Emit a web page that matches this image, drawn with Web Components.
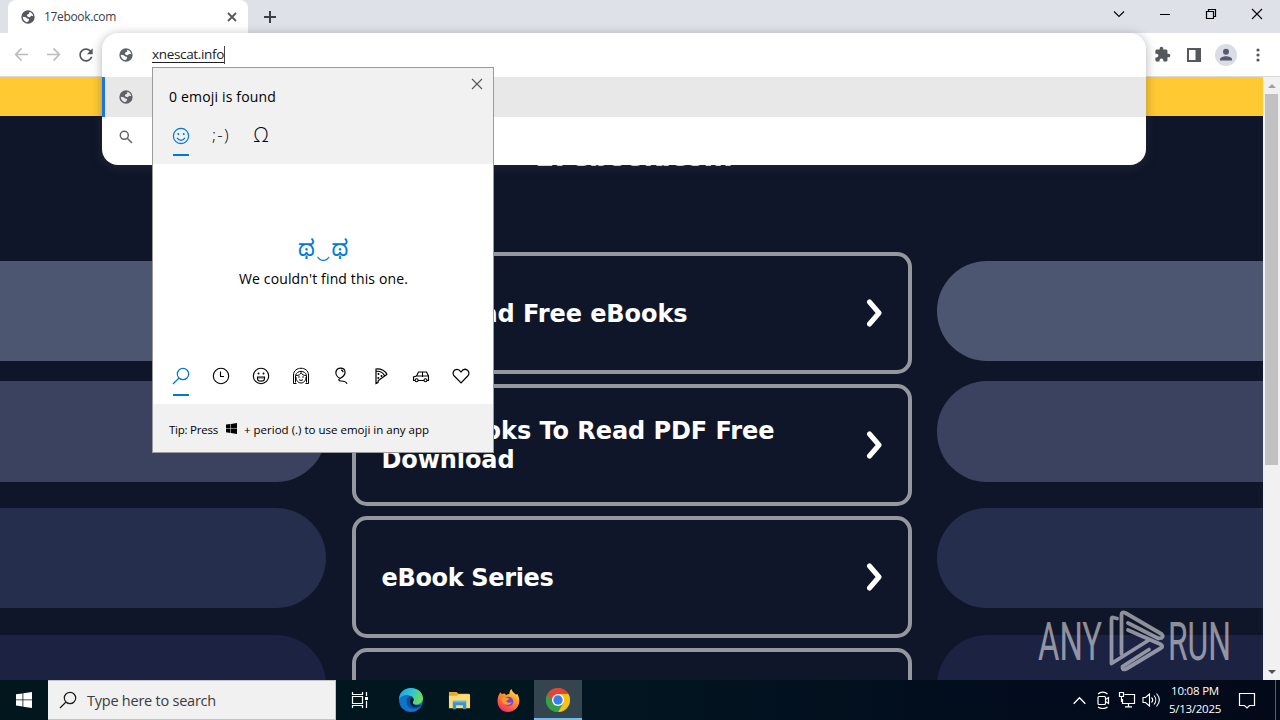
<!DOCTYPE html>
<html lang="en">
<head>
<meta charset="utf-8">
<title>17ebook.com</title>
<style>
  body {
    margin: 0;
    width: 1280px;
    height: 720px;
    overflow: hidden;
    font-family: "Open Sans", "Noto Sans", sans-serif;
  }
</style>
</head>
<body>
<desktop-screen>
  <browser-window>
    <tab-strip slot="tabs" title="17ebook.com"></tab-strip>
    <browser-toolbar slot="toolbar"></browser-toolbar>
    <parked-page slot="page">
      <link-card>
        <fit-text width="306">Download Free eBooks</fit-text>
      </link-card>
      <link-card>
        <fit-text width="393">Best Books To Read PDF Free</fit-text>
        <fit-text width="133">Download</fit-text>
      </link-card>
      <link-card>
        <fit-text width="172">eBook Series</fit-text>
      </link-card>
      <link-card></link-card>
    </parked-page>
  </browser-window>
  <task-bar></task-bar>
  <omnibox-popup slot="over"></omnibox-popup>
  <emoji-panel slot="over"></emoji-panel>
  <water-mark slot="over"></water-mark>
</desktop-screen>

<script>
// icon shapes, [viewBox size, markup]
const icons = {
  globe: [24, `<path fill="currentColor" fill-rule="evenodd" d="M12 2a10 10 0 1 0 0 20a10 10 0 1 0 0-20zM14.200 4.200C17.500 5.200 19.400 7.600 19.900 10.800L17 10.300l-2.500 2-3-.800-1.300-2 1.500-1.500 1.800-.800zM4.100 11.800l4.600.500 2 1.800 3 .800-.700 3-2.500 2C6.800 19 4.100 15.800 4.100 11.800z"/>`],
  cross: [16, `<path d="M4 4l8 8M12 4l-8 8" stroke="currentColor" stroke-width="1.8"/>`],
  plus: [16, `<path d="M8 2v12M2 8h12" stroke="currentColor" stroke-width="2"/>`],
  tabsearch: [16, `<path d="M3 5.500l5 5 5-5" fill="none" stroke="currentColor" stroke-width="1.100"/>`],
  minimize: [16, `<path d="M3 8.5h10" stroke="currentColor"/>`],
  restore: [16, `<path d="M3.500 5.500h7v7h-7zM5.500 5v-1.500h7v7H11" fill="none" stroke="currentColor" stroke-width="1.2"/>`],
  close: [16, `<path d="M3 3l10 10M13 3L3 13" stroke="currentColor" stroke-width="1.1"/>`],
  back: [16, `<path d="M15 8H2M8 1.500L1.800 8 8 14.500" fill="none" stroke="currentColor" stroke-width="1.800"/>`],
  forward: [16, `<path d="M1 8h13M8 1.500L14.200 8 8 14.500" fill="none" stroke="currentColor" stroke-width="1.800"/>`],
  reload: [24, `<path fill="currentColor" d="M17.650 6.350C16.200 4.900 14.210 4 12 4c-4.420 0-7.990 3.580-7.990 8s3.570 8 7.990 8c3.730 0 6.840-2.550 7.730-6h-2.080c-.820 2.330-3.040 4-5.650 4-3.310 0-6-2.690-6-6s2.690-6 6-6c1.660 0 3.140.690 4.220 1.780L13 11h7V4l-2.350 2.350z"/>`],
  puzzle: [24, `<path fill="currentColor" d="M20.500 11H19V7c0-1.100-.900-2-2-2h-4V3.500C13 2.120 11.880 1 10.500 1S8 2.120 8 3.500V5H4c-1.100 0-1.990.900-1.990 2v3.800H3.500c1.490 0 2.700 1.210 2.700 2.700s-1.210 2.700-2.700 2.700H2V20c0 1.100.900 2 2 2h3.800v-1.500c0-1.490 1.210-2.700 2.700-2.700 1.490 0 2.700 1.210 2.700 2.700V22H17c1.100 0 2-.900 2-2v-4h1.500c1.380 0 2.500-1.120 2.500-2.500S21.880 11 20.500 11z"/>`],
  sidepanel: [16, `<path fill="currentColor" fill-rule="evenodd" d="M1 1h14v14H1zM3 3v10h6.500V3z"/>`],
  profile: [22, `<circle cx="11" cy="11" r="11" fill="#dadce6"/><circle cx="11" cy="7.700" r="3" fill="currentColor"/><path fill="currentColor" d="M5 16.500v-1.300c0-2 3.500-3 6-3s6 1 6 3v1.300z"/>`],
  dots: [16, `<g fill="currentColor"><circle cx="8" cy="3" r="1.600"/><circle cx="8" cy="8" r="1.600"/><circle cx="8" cy="13" r="1.600"/></g>`],
  lens: [16, `<g fill="none" stroke="currentColor" stroke-width="1.500"><circle cx="6.300" cy="6.300" r="4"/><path d="M9.300 9.300l4.700 4.700"/></g>`],
  winlens: [18, `<g fill="none" stroke="currentColor" stroke-width="1.200"><circle cx="11" cy="7" r="5.700"/><path d="M7 11l-6 6"/></g>`],
  smile: [18, `<g fill="none" stroke="currentColor" stroke-width="1.200"><circle cx="9" cy="9" r="7.600"/><path d="M5 10.800c1.700 3.300 6.300 3.300 8 0"/></g><circle cx="6.300" cy="7" r="1"/><circle cx="11.700" cy="7" r="1"/>`],
  clock: [18, `<g fill="none" stroke="currentColor" stroke-width="1.100"><circle cx="9" cy="9" r="7.700"/><path d="M8.500 4.500v5H12"/></g>`],
  grin: [18, `<g fill="none" stroke="currentColor" stroke-width="1.100"><circle cx="9" cy="9" r="7.700"/><path d="M5.500 10h7v1.500c0 3.500-7 3.500-7 0z"/><path d="M5.500 11h7" stroke-width=".6"/></g><circle cx="6.500" cy="6.500" r="1"/><circle cx="11.500" cy="6.500" r="1"/>`],
  person: [18, `<g fill="none" stroke="currentColor"><path d="M1.500 16.500V8C1.500-1 16.500-1 16.500 8v8.500h-3M1.500 16.500h3M3.500 15.500V8.500C4.500 3 13.500 3 14.500 8.500v7"/><path d="M4 10c0 8 10 8 10 0M4 8.500c3 0 4.500-1 5-3 1 2 2.500 3 5 3M7 12.500c1 1.200 3 1.200 4 0"/></g><circle cx="7" cy="10" r=".8"/><circle cx="11" cy="10" r=".8"/>`],
  balloon: [18, `<g fill="none" stroke="currentColor" stroke-width="1.200"><path d="M8 11.500C4.500 9.500 3.500 6.500 4 4.500c1-4.500 8.500-4.500 9 0 .300 3-2 5.500-5 7zM8 11.500c-2 1-1.500 2.500 1 2.500s5 .500 6 2.700"/><path d="M9 3.200c1.500 0 2 1 2 2"/></g>`],
  pizza: [18, `<g fill="none" stroke="currentColor" stroke-width="1.200"><path d="M4 2v14.500l2-1 .300-2L14.800 7.500C14 4 9 1.500 4 2zM4 4.300c4-.300 7.200 1.500 8.500 4.500"/></g><circle cx="6.500" cy="7" r="1"/><circle cx="9.500" cy="9" r="1"/><circle cx="6.300" cy="11" r="1"/>`],
  car: [18, `<g fill="none" stroke="currentColor" stroke-width="1.100"><path d="M3 13.500H1.500v-3.500L4.500 9l2-4h8l2 4v4.500H15M6 13.500h6M4.500 9h12M10.500 5v5"/><circle cx="4.600" cy="13.300" r="1.500"/><circle cx="13.500" cy="13.300" r="1.500"/></g>`],
  heart: [18, `<path d="M9 15.800L2.300 9C.300 6.800 1 4.200 2.800 3c2-1.300 4.500-.500 6.200 2 1.700-2.500 4.200-3.300 6.200-2 1.800 1.200 2.500 3.800.500 6z" fill="none" stroke="currentColor" stroke-width="1.200"/>`],
  windows: [16, `<path fill="currentColor" d="M0 2.300l6.500-.900v6.100H0zM7.300 1.300L16 0v7.500H7.300zM0 8.300h6.500v6.200L0 13.600zM7.300 8.300H16V16l-8.700-1.300z"/>`],
  taskview: [18, `<g fill="none" stroke="currentColor" stroke-width="1.200"><path d="M1.500 1v2.500h10V1M1.500 17v-2.500h10V17M1.500 5.500h10v7h-10zM15.500 1v4M15.500 10v7"/></g><path fill="currentColor" d="M14 6h3v3h-3z"/>`],
  edge: [24, `<defs><linearGradient id="a" x2="1" y2=".3"><stop stop-color="#1a9de0"/><stop offset=".55" stop-color="#32c4d4"/><stop offset="1" stop-color="#6bdb58"/></linearGradient></defs><circle cx="12" cy="12" r="12" fill="#1173c9"/><path fill="url(#a)" d="M0 11C1-4 23-3 24 10c0 4-3 6.500-7 6.500-2.500 0-3.600-1-3.300-2 .6-.8.8-1.500.8-2.500C14.500 7 5 4 0 11z"/><path fill="#0b4f9c" d="M7.500 13c0-3 2-5 4.500-5 2 .7 3 2.500 2.300 4.500-.4 1-.8 1.300-.5 2.500.6 2.500 5 3.500 8.700 1.400C19 23 7.500 22.500 7.500 13z"/><path fill="#021820" d="M12.500 9.500c2 .5 2.600 2 1.800 3.500-.9 1.300-.8 2 0 3 1.800 2 5.700 1.900 8.400.3-2.500 2.600-6.600 3.800-9.200 1.700-2.800-2.300-3-6-1-8.500z"/>`],
  folder: [24, `<path fill="#e8a92c" d="M1 3h8l2 2h11v4H1z"/><path fill="#ffdc73" d="M1 7h8l2-1.500h12V20H1z"/><path fill="#3a94d3" d="M5 21v-8h14v8h-3.500v-4h-7v4z"/><path fill="#6bb7e8" d="M5 12h14v2H5z"/>`],
  firefox: [24, `<defs><linearGradient id="b" x1=".8" x2=".2" y2="1"><stop stop-color="#ffe640"/><stop offset=".45" stop-color="#ff8a2a"/><stop offset="1" stop-color="#f4246b"/></linearGradient></defs><path fill="url(#b)" d="M3.500 3.500l1.700 2L7.500 4.500 9.500 6.200 13 5c0-2 .5-3.500 2-5 .7 3 3 4 5 6l1-1c6 9-.500 19-9.500 19C2 24-3 13 3.500 3.500z"/><circle cx="12" cy="13" r="5" fill="#7b43d6"/><path fill="#ff9a24" d="M4.500 9.500c3-2 5.500-.5 8 .3-.5 1.800-2 1.800-3 2.500.5 2.500 4.500 2.500 6 1-1 5-11 5-11-3.800z"/>`],
  chrome: [24, `<circle cx="12" cy="12" r="12" fill="#34a048"/><path fill="#e64335" d="M1.600 6A12 12 0 0 1 22.400 6H12l-5.200 9z"/><path fill="#fbc116" d="M22.400 6A12 12 0 0 1 12 24l5.200-9L12 6z"/><path fill="#34a048" d="M1.600 6l5.200 9h10.400L12 24A12 12 0 0 1 1.600 6z"/><circle cx="12" cy="12" r="6" fill="#fff"/><circle cx="12" cy="12" r="4.700" fill="#3b7ded"/>`],
  chevup: [16, `<path d="M2.500 11L8 5.500l5.500 5.500" fill="none" stroke="currentColor" stroke-width="1.300"/>`],
  meet: [18, `<g fill="none" stroke="currentColor" stroke-width="1.200"><rect x="4" y="5.500" width="7.500" height="8" rx="1"/><path d="M11.500 8.500l3-2v6l-3-2M4 3c2.500-2.500 7-2.500 9.500 0M4 16c2.500 2 7 2 9.500 0"/></g>`],
  network: [18, `<g fill="none" stroke="currentColor" stroke-width="1.200"><path d="M6.500 3.500h10v9h-12V8M10.500 12.500v3M7 15.800h7M1.500 1.500h4v4h-4zM3.500 5.500v5h1.500"/></g>`],
  volume: [18, `<g fill="none" stroke="currentColor" stroke-width="1.100"><path d="M1 6.500h2.500L7.500 3v12L3.500 11.500H1zM9.500 6.500c1.500 1.500 1.500 3.500 0 5M12 4.500c2.300 2.600 2.300 6.400 0 9M14.500 2.500c3.500 4 3.500 9 0 13"/></g>`],
  notice: [18, `<path d="M1.500 2.500h15v12h-5L9 17l-2.500-2.500h-5z" fill="none" stroke="currentColor" stroke-width="1.200"/>`],
  next: [28, `<path d="M8.500 3l9.500 11-9.500 11" fill="none" stroke="currentColor" stroke-width="5" stroke-linecap="round" stroke-linejoin="round"/>`]
};

// every element gets its template cloned into an open shadow root
class BaseElement extends HTMLElement {
  constructor() {
    super();
    const template = document.createElement("template");
    template.innerHTML = this.html();
    this.attachShadow({ mode: "open" }).appendChild(template.content.cloneNode(true));
  }
}

// <ui-icon name="" size="">
customElements.define("ui-icon", class extends HTMLElement {
  shadowDom = this.attachShadow({ mode: "open" });
  connectedCallback() {
    const [box, shape] = icons[this.getAttribute("name")];
    const size = this.getAttribute("size") || 16;
    this.shadowDom.innerHTML = `
<style>
  :host { display: block; flex: none; width: ${size}px; height: ${size}px; }
  svg { display: block; fill: currentColor; }
</style>
<svg width="${size}" height="${size}" viewBox="0 0 ${box} ${box}">${shape}</svg>`;
  }
});

// <fit-text width="">, spreads its letters over the given width
customElements.define("fit-text", class extends HTMLElement {
  shadowDom = this.attachShadow({ mode: "open" });
  connectedCallback() {
    this.shadowDom.innerHTML = `
<style>
  :host { display: block; }
  span { display: block; width: max-content; white-space: nowrap; }
</style>
<span><slot></slot></span>`;
    const fit = () => {
      const span = this.shadowDom.querySelector("span");
      span.style.letterSpacing = "0";
      const rest = this.getAttribute("width") - span.getBoundingClientRect().width;
      span.style.letterSpacing = rest / this.textContent.length + "px";
    };
    window.addEventListener("load", fit);
  }
});

customElements.define("desktop-screen", class extends BaseElement {
  html() {
    return /*html*/ `
<style>
  :host { display: flex; flex-direction: column; position: relative; width: 1280px; height: 720px; overflow: hidden; }
</style>
<slot></slot>
<slot name="over"></slot>`;
  }
});

customElements.define("browser-window", class extends BaseElement {
  html() {
    return /*html*/ `
<style>
  :host { display: flex; flex-direction: column; height: 680px; overflow: hidden; background: #fff; }
  .content { flex: 1; display: flex; min-height: 0; }
</style>
<slot name="tabs"></slot>
<slot name="toolbar"></slot>
<div class="content">
  <slot name="page"></slot>
  <scroll-bar></scroll-bar>
</div>`;
  }
});

customElements.define("tab-strip", class extends BaseElement {
  html() {
    return /*html*/ `
<style>
  :host { display: flex; height: 33px; background: #dee1e8; color: #202124; padding-left: 8px; }
  .tab { box-sizing: border-box; display: flex; align-items: center; width: 240px; height: 33px; padding: 0 8px 0 12px; background: #fff; border-radius: 8px 8px 0 0; font-size: 12px; color: #3c4043; }
  .tab fit-text { flex: 1; margin-left: 8px; }
  .tab ui-icon { color: #55585c; }
  .new { margin: 9px 0 0 14px; color: #3c4043; }
  .controls { display: flex; margin-left: auto; align-items: center; height: 28px; gap: 30px; padding-right: 15px; color: #000; }
</style>
<div class="tab">
  <ui-icon name="globe"></ui-icon>
  <fit-text width="72">17ebook.com</fit-text>
  <ui-icon name="cross" size="16"></ui-icon>
</div>
<ui-icon class="new" name="plus"></ui-icon>
<div class="controls">
  <ui-icon name="tabsearch"></ui-icon>
  <ui-icon name="minimize"></ui-icon>
  <ui-icon name="restore"></ui-icon>
  <ui-icon name="close"></ui-icon>
</div>`;
  }
});

customElements.define("browser-toolbar", class extends BaseElement {
  html() {
    return /*html*/ `
<style>
  :host { box-sizing: border-box; display: flex; justify-content: space-between; align-items: center; height: 44px; padding: 0 14px; border-bottom: 1px solid #d8dadd; background: #fff; color: #54575c; }
  .group { display: flex; align-items: center; }
  .nav { gap: 17px; }
  .nav .off { color: #bbbdc0; }
  .nav ui-icon:last-child { margin-left: -2px; }
  .tools { gap: 15px; }
  .tools .profile { margin: 0 -2px; color: #565a72; }
</style>
<div class="group nav">
  <ui-icon class="off" name="back" size="15"></ui-icon>
  <ui-icon class="off" name="forward" size="15"></ui-icon>
  <ui-icon name="reload" size="20"></ui-icon>
</div>
<div class="group tools">
  <ui-icon name="puzzle" size="17"></ui-icon>
  <ui-icon name="sidepanel" size="16"></ui-icon>
  <ui-icon class="profile" name="profile" size="22"></ui-icon>
  <ui-icon name="dots" size="16"></ui-icon>
</div>`;
  }
});

customElements.define("scroll-bar", class extends BaseElement {
  html() {
    return /*html*/ `
<style>
  :host { display: flex; flex-direction: column; align-items: center; width: 17px; background: #f1f1f1; }
  i { height: 17px; display: flex; align-items: center; }
  i::before { content: ""; border: 4px solid transparent; }
  .up::before { border-top: 0; border-bottom-color: #a0a0a0; }
  .down { margin-top: auto; }
  .down::before { border-bottom: 0; border-top-color: #505050; }
  .thumb { width: 13px; height: 371px; background: #c1c1c1; }
</style>
<i class="up"></i>
<div class="thumb"></div>
<i class="down"></i>`;
  }
});

customElements.define("parked-page", class extends BaseElement {
  html() {
    return /*html*/ `
<style>
  :host { display: flex; flex-direction: column; width: 1263px; overflow: hidden; background: #10162a; color: #fff; }
  .band { flex: none; height: 39px; background: #ffc933; }
  .columns { display: grid; grid-template-columns: 326px 1fr 326px; height: 564px; }
  .side { display: flex; flex-direction: column; padding-top: 145px; }
  .side b { flex: none; height: 100px; border-radius: 0 50px 50px 0; background: #4d5671; }
  .right b { border-radius: 50px 0 0 50px; }
  .side b:nth-child(2) { margin-top: 20px; height: 101px; background: #3b4260; }
  .side b:nth-child(3) { margin-top: 26px; background: #262e4e; }
  .side b:nth-child(4) { margin-top: 27px; background: #1b2242; }
  .middle { display: flex; flex-direction: column; align-items: center; font: bold 24px/29px "DejaVu Sans", sans-serif; }
  h1 { margin: 26px 0 81px; height: 29px; font: bold 28px/29px "DejaVu Sans", sans-serif; }
  h1 fit-text { margin-left: 3px; }
  .list { display: flex; flex-direction: column; gap: 10px; }
</style>
<div class="band"></div>
<div class="columns">
  <div class="side left"><b></b><b></b><b></b><b></b></div>
  <div class="middle">
    <h1><fit-text width="197">17ebook.com</fit-text></h1>
    <div class="list"><slot></slot></div>
  </div>
  <div class="side right"><b></b><b></b><b></b><b></b></div>
</div>`;
  }
});

customElements.define("link-card", class extends BaseElement {
  html() {
    return /*html*/ `
<style>
  :host { box-sizing: border-box; display: flex; align-items: center; justify-content: space-between; width: 560px; height: 122px; padding: 0 19px 0 26px; border: 4px solid #94979b; border-radius: 15px; background: #10162a; }
  div { padding-top: 2px; }
</style>
<div><slot></slot></div>
<ui-icon name="next" size="28"></ui-icon>`;
  }
});

customElements.define("omnibox-popup", class extends BaseElement {
  html() {
    return /*html*/ `
<style>
  :host { position: absolute; left: 102px; top: 33px; width: 1044px; height: 132px; border-radius: 16px; overflow: hidden; background: #fff; box-shadow: 0 2px 10px 1px rgba(60, 64, 67, .34); font-size: 13.5px; color: #202124; }
  .row { box-sizing: border-box; display: flex; align-items: center; height: 44px; padding-left: 16px; color: #5f6368; }
  .row.picked { height: 40px; padding-left: 13px; border-left: 3px solid #1a73e8; background: #e8e8e8; }
  .row.last { height: 40px; }
  .typed { margin: 0 0 1px 18px; line-height: 15px; border-bottom: 1px solid #202124; color: #202124; }
  .caret { width: 1px; height: 18px; background: #444; margin-bottom: 1px; }
</style>
<div class="row">
  <ui-icon name="globe"></ui-icon>
  <fit-text class="typed" width="72">xnescat.info</fit-text>
  <div class="caret"></div>
</div>
<div class="row picked"><ui-icon name="globe"></ui-icon></div>
<div class="row last"><ui-icon name="lens"></ui-icon></div>`;
  }
});

customElements.define("emoji-panel", class extends BaseElement {
  html() {
    return /*html*/ `
<style>
  :host { box-sizing: border-box; position: absolute; left: 152px; top: 67px; width: 342px; height: 386px; display: flex; flex-direction: column; border: 1px solid #9b9b9b; background: #fff; color: #000; font-size: 14px; }
  header { box-sizing: border-box; display: flex; flex-direction: column; flex: none; height: 96px; padding-left: 8px; background: #f1f1f1; }
  .top { display: flex; justify-content: space-between; height: 48px; padding: 0 8px; }
  .top fit-text { line-height: 20px; margin-top: 19px; }
  .top ui-icon { margin-top: 8px; color: #555; }
  .tabs { display: flex; }
  .tabs > * { box-sizing: border-box; width: 40px; height: 40px; display: flex; align-items: center; justify-content: center; }
  .tabs .on { flex-direction: column; color: #0078d7; }
  .tabs .on::after { content: ""; width: 16px; height: 2px; margin: 9px 0 -11px; background: #0078d7; }
  main { flex: 1; display: flex; flex-direction: column; align-items: center; }
  .face { margin: 72px 0 0 2px; height: 34px; font: 22px/34px "Noto Sans Kannada", "Noto Sans", "DejaVu Sans", sans-serif; color: #0078d7; }
  main .note { line-height: 20px; margin: -1px 0 0 1px; }
  .kinds { align-self: flex-start; margin: auto 0 0 8px; padding-bottom: 8px; }
  footer { display: flex; align-items: center; flex: none; height: 48px; padding: 3px 0 0 16px; box-sizing: border-box; background: #f1f1f1; font-size: 11.5px; }
  footer ui-icon { margin: -2px 7px 0 8px; }
  .sign { font-size: 17px; font-weight: 300; padding-bottom: 3px; }
  .omega { font-size: 20px; }
</style>
<header>
  <div class="top">
    <fit-text width="107">0 emoji is found</fit-text>
    <ui-icon name="close" size="16"></ui-icon>
  </div>
  <div class="tabs">
    <div class="on"><ui-icon name="smile" size="18"></ui-icon></div>
    <div><fit-text class="sign" width="18">;-)</fit-text></div>
    <div class="sign omega">Ω</div>
  </div>
</header>
<main>
  <fit-text class="face" width="52">ಥ‿ಥ</fit-text>
  <fit-text class="note" width="169">We couldn't find this one.</fit-text>
  <div class="tabs kinds">
    <div class="on"><ui-icon name="winlens" size="18"></ui-icon></div>
    <div><ui-icon name="clock" size="18"></ui-icon></div>
    <div><ui-icon name="grin" size="18"></ui-icon></div>
    <div><ui-icon name="person" size="18"></ui-icon></div>
    <div><ui-icon name="balloon" size="18"></ui-icon></div>
    <div><ui-icon name="pizza" size="18"></ui-icon></div>
    <div><ui-icon name="car" size="18"></ui-icon></div>
    <div><ui-icon name="heart" size="18"></ui-icon></div>
  </div>
</main>
<footer>
  <fit-text width="49">Tip: Press</fit-text>
  <ui-icon name="windows" size="11"></ui-icon>
  <fit-text width="185">+ period (.) to use emoji in any app</fit-text>
</footer>`;
  }
});

customElements.define("water-mark", class extends BaseElement {
  html() {
    return /*html*/ `
<style>
  :host { position: absolute; left: 1036px; top: 606px; opacity: .52; }
  svg { display: block; overflow: visible; }
  text { font: 53px "Roboto", sans-serif; fill: #fff; }
  path { fill: none; stroke: #fff; stroke-width: 3.8; stroke-linejoin: round; stroke-linecap: round; }
</style>
<svg width="215" height="72" viewBox="0 0 215 72">
  <text x="2" y="53.500" textLength="64" lengthAdjust="spacingAndGlyphs">ANY</text>
  <path d="M81 12.500l-4-1q-1.500 0-1.500 2V57.500L113 34"/>
  <path d="M85.500 48V9q0-4 4-2l36 21q2.500 2 0 4l-3 .500L92 17"/>
  <path d="M92 24l33 14.500q2.500 2 0 3.500L90 63q-4 1.500-3.500-2.500L113 43.500"/>
  <text x="132" y="53.500" textLength="63" lengthAdjust="spacingAndGlyphs">RUN</text>
</svg>`;
  }
});

customElements.define("task-bar", class extends BaseElement {
  html() {
    return /*html*/ `
<style>
  :host { display: flex; height: 40px; background: linear-gradient(90deg, #02161e, #021621 45%, #020c1d 80%, #020a1a); color: #fff; }
  .cell { display: flex; align-items: center; justify-content: center; width: 48px; }
  .search { box-sizing: border-box; display: flex; align-items: center; width: 288px; padding-left: 11px; background: #f1f1f1; border: 1px solid #c4c4c4; border-left: 0; color: #1c1c1c; font-size: 14.5px; }
  .search fit-text { margin-left: 10px; color: #3b3b3b; }
  .apps { display: flex; margin-right: auto; }
  .apps .cell:nth-child(n+2) { width: 49px; }
  .apps .cell:nth-child(2) { margin-left: 2px; }
  .apps .cell.on { box-sizing: border-box; width: 48px; margin-left: 1px; background: #34454f; border-bottom: 2px solid #76b9ed; padding-top: 2px; }
  .tray { display: flex; align-items: center; gap: 6px; margin-right: 5px; }
  .clock { width: 60px; display: flex; flex-direction: column; align-items: center; justify-content: center; font-size: 11.5px; line-height: 18px; margin-right: 13px; }
  .notice { align-self: center; margin-right: 19px; }
  .edge { width: 1px; margin-right: 4px; background: #55606c; }
</style>
<div class="cell"><ui-icon name="windows" size="16"></ui-icon></div>
<div class="search">
  <ui-icon name="winlens" size="18"></ui-icon>
  <fit-text width="129">Type here to search</fit-text>
</div>
<div class="apps">
  <div class="cell"><ui-icon name="taskview" size="18"></ui-icon></div>
  <div class="cell"><ui-icon name="edge" size="24"></ui-icon></div>
  <div class="cell"><ui-icon name="folder" size="23"></ui-icon></div>
  <div class="cell"><ui-icon name="firefox" size="23"></ui-icon></div>
  <div class="cell on"><ui-icon name="chrome" size="24"></ui-icon></div>
</div>
<div class="tray">
  <ui-icon name="chevup" size="17"></ui-icon>
  <ui-icon name="meet" size="18"></ui-icon>
  <ui-icon name="network" size="18"></ui-icon>
  <ui-icon name="volume" size="18"></ui-icon>
</div>
<div class="clock">
  <fit-text width="48">10:08 PM</fit-text>
  <fit-text width="52">5/13/2025</fit-text>
</div>
<ui-icon class="notice" name="notice" size="18"></ui-icon>
<div class="edge"></div>`;
  }
});
</script>
</body>
</html>
